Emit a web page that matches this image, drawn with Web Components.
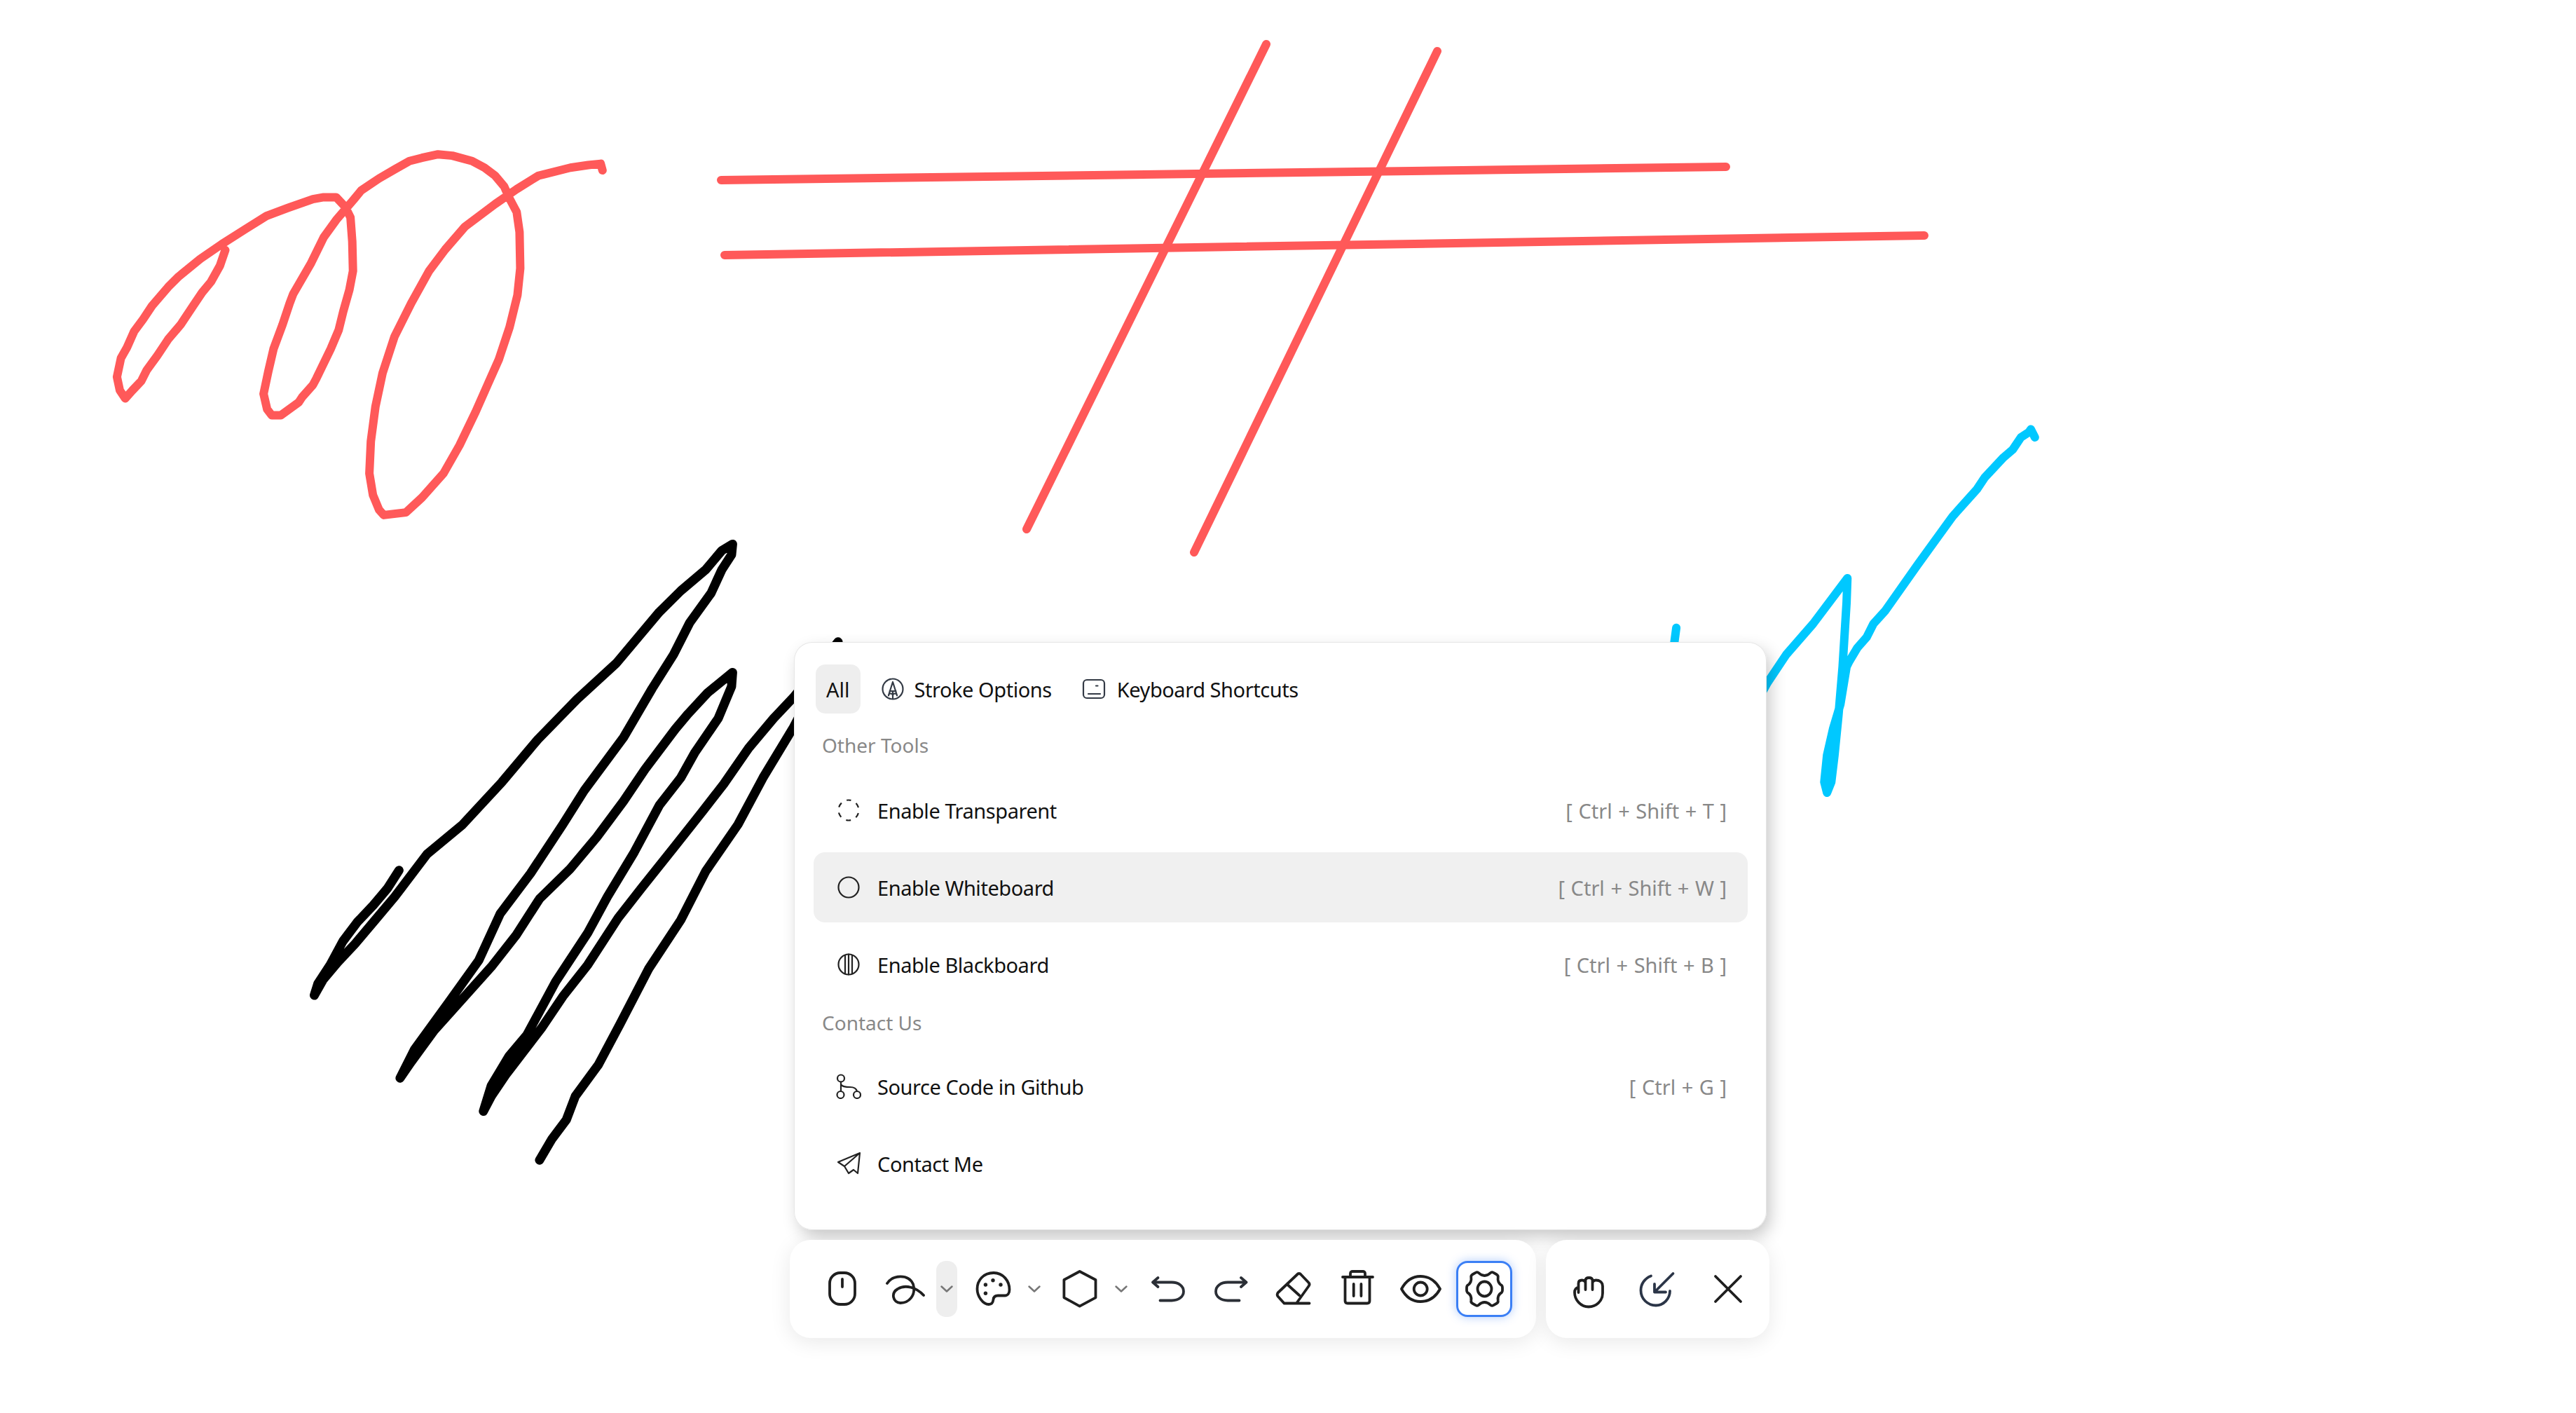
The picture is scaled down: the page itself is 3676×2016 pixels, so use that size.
<!DOCTYPE html>
<html>
<head>
<meta charset="utf-8">
<title>Sketch</title>
<style>
    html, body { margin: 0; padding: 0; background: #fff; }
</style>
</head>
<body>
<sketch-app>
    <tool-panel>
        <panel-tab active>All</panel-tab>
        <panel-tab icon="stroke">Stroke Options</panel-tab>
        <panel-tab icon="keyboard">Keyboard Shortcuts</panel-tab>
        <panel-group slot="groups" heading="Other Tools">
            <panel-item icon="dashed" shortcut="[ Ctrl + Shift + T ]">Enable Transparent</panel-item>
            <panel-item icon="circle" shortcut="[ Ctrl + Shift + W ]" active>Enable Whiteboard</panel-item>
            <panel-item icon="striped" shortcut="[ Ctrl + Shift + B ]">Enable Blackboard</panel-item>
        </panel-group>
        <panel-group slot="groups" heading="Contact Us">
            <panel-item icon="git" shortcut="[ Ctrl + G ]">Source Code in Github</panel-item>
            <panel-item icon="send">Contact Me</panel-item>
        </panel-group>
    </tool-panel>
    <tool-dock slot="dock">
        <tool-bar class="main">
            <tool-button icon="mouse"></tool-button>
            <tool-button icon="squiggle"></tool-button>
            <tool-chevron hover></tool-chevron>
            <tool-button icon="palette"></tool-button>
            <tool-chevron></tool-chevron>
            <tool-button icon="hexagon"></tool-button>
            <tool-chevron></tool-chevron>
            <tool-button icon="undo"></tool-button>
            <tool-button icon="redo"></tool-button>
            <tool-button icon="eraser"></tool-button>
            <tool-button icon="trash"></tool-button>
            <tool-button icon="eye"></tool-button>
            <tool-button icon="gear" active></tool-button>
        </tool-bar>
        <tool-bar wide>
            <tool-button icon="hand"></tool-button>
            <tool-button icon="pointer"></tool-button>
            <tool-button icon="close"></tool-button>
        </tool-bar>
    </tool-dock>
</sketch-app>

<script>
const UI_FONT = '"Noto Sans", "Open Sans", sans-serif';

// Toolbar icons are drawn on a 64 box, panel icons on a 36 box
const ICONS = {
    mouse: '<rect x="14" y="9" width="36" height="45" rx="15"/><path d="M32 18V29"/>',
    squiggle: '<path d="M6 24C14 12 36 10 43 25C48 42 36 52 25 52C14 51 11 38 21 32C32 25 48 30 58 41"/>',
    palette: '<path d="M33 9C18 9 9.5 20 9.5 32C9.5 43 18 54 26 54C31 54 32 51 32.5 47C33 43 35 41.5 39 41.5H49C53 41.5 55.5 38 55.5 33C55.5 20 46 9 33 9Z"/><g fill="#222" stroke="none"><circle cx="21.4" cy="26" r="2.7"/><circle cx="32" cy="19.7" r="2.7"/><circle cx="43" cy="26" r="2.7"/><circle cx="21.4" cy="38.3" r="2.7"/></g>',
    hexagon: '<path d="M31.7 7L54.5 19V44.3L31.7 56.7L9.4 44.3V19Z"/>',
    undo: '<g stroke="#2b2f36"><path d="M18.5 16L11 22.5L18.5 29M11 22.5H38C48 22.5 55 28 55 35.5C55 43 48 48.5 38 48.5H21.5"/></g>',
    redo: '<g stroke="#2b2f36"><path d="M47 16L54.5 22.5L47 29M54.5 22.5H28C18 22.5 11 28 11 35.5C11 43 18 48.5 28 48.5H44.5"/></g>',
    eraser: '<path d="M37 11.5C38.5 9.5 41 9.5 42.5 11.5L53.5 23C54.8 24.5 54.8 26.5 53.5 28L36 52.5H18.5L9.5 42.5C8.3 41 8.3 39.5 9.5 37.5ZM24 26.5L40 41M18.5 52.5H54.5"/>',
    trash: '<path d="M11 15H54M22 15V10C22 8 23.500 7 25 7H40C41.500 7 43 8 43 10V15M14.500 15V49C14.500 51 15.500 52.500 18 52.500H46C48.500 52.500 49.500 51 49.500 49V15M26.700 25V42M37.400 25V42"/>',
    eye: '<path d="M5 32C12 19 22 14 32 14C43 14 53 19 60 32C53 45 43 50 32 50C22 50 12 45 5 32Z"/><circle cx="32.200" cy="32" r="9.500"/>',
    gear: '<path d="M24 9C27 12 29.500 13 32.500 13C35.500 13 38 12 41 9C42.500 8 44 8 45 8.700L50 11.500C51.500 12.500 52 14 51.700 15.500C51 20 52 24 57 27C58 28 58 29 58 30V34C58 35 58 36 57 37C52 40 51 44 51.700 48.500C52 50 51.500 51.500 50 52.500L45 55.300C44 56 42.500 56 41 55C38 52 35.500 51 32.500 51C29.500 51 27 52 24 55C22.500 56 21 56 20 55.300L15 52.500C13.500 51.500 13 50 13.300 48.500C14 44 13 40 8 37C7 36 7 35 7 34V30C7 29 7 28 8 27C13 24 14 20 13.300 15.500C13 14 13.500 12.500 15 11.500L20 8.700C21 8 22.500 8 24 9Z"/><ellipse cx="32.500" cy="32" rx="10" ry="10.500"/>',
    hand: '<path d="M13 37C13 32.500 15 30 18.500 30V24C18.500 20.500 21 19.500 23.500 19.500C26 19.500 28.500 20.500 28.500 24V20C28.500 17 31 16 33.500 16C36 16 38.500 17 38.500 20V24C38.500 20.500 41 19.500 43.500 19.500C48 19.500 53 22 53 28V38C53 49 44 57.500 33 57.500C22 57.500 13 48 13 37ZM28.500 24V33M38.500 24V33M18.500 30V37"/>',
    pointer: '<g stroke="#2b3547"><path d="M23 13.500C14 17 8.500 25 8.500 34C8.500 46 18 55.500 30 55.500C41 55.500 50 46 50 35"/><path d="M54.500 10L28 36.500M28 25V36.500H44"/></g>',
    close: '<path d="M15 14L51 50M51 14L15 50"/>',
    stroke: '<circle cx="18" cy="18" r="14.500"/><path d="M12 27L18 8L24 27M13.500 21H22.500M12 27.500A3 3 0 0 1 18 27.500A3 3 0 0 1 24 27.500M18 22V32"/>',
    keyboard: '<rect x="3" y="5" width="30" height="26" rx="5"/><path d="M21 13.500H23.500M10 25H27"/>',
    dashed: '<circle cx="18" cy="18" r="14.500" stroke-dasharray="7 8.180" stroke-dashoffset="3.500" transform="rotate(-90 18 18)" stroke-linecap="butt"/>',
    circle: '<circle cx="18" cy="18" r="14.500"/>',
    striped: '<circle cx="18" cy="18" r="14.500"/><path d="M13 5V31M18 3.500V32.500M23 5V31"/>',
    git: '<circle cx="7" cy="6.500" r="5"/><circle cx="6.500" cy="30" r="5"/><circle cx="30" cy="30" r="5"/><path d="M7 11.500V25M7 15C9 19 15 19 20 19C26 19 29 21 30 25"/>',
    send: '<path d="M34 3L3 16L12 22L18 32L25 27L31 32ZM34 3L12 22"/>'
};

function iconSvg(name, size) {
    return `<svg width="${size}" height="${size}" viewBox="0 0 ${size} ${size}" fill="none" stroke="currentColor" stroke-linecap="round" stroke-linejoin="round">${ICONS[name]}</svg>`;
}

// Strokes traced from zoomed crops: [origin x, origin y, scale x, scale y]
const STROKES = [
    {
        color: '#ff5959',
        crop: [120, 180, 1.96, 2.613],
        points: [395,462, 380,520, 355,580, 330,620, 305,670, 270,740, 235,795, 205,855, 175,910, 160,950, 135,985, 115,1015, 100,985, 92,935, 103,865, 120,825, 140,765, 165,720, 190,670, 235,600, 265,560, 325,495, 385,440, 450,385, 510,335, 570,305, 640,272, 670,265, 705,265, 730,300, 745,340, 750,430, 752,540, 742,610, 725,690, 712,760, 690,830, 650,940, 640,965, 610,1010, 600,1030, 550,1078, 525,1078, 512,1055, 502,998, 515,915, 530,830, 555,740, 575,660, 585,625, 635,510, 670,415, 705,350, 750,280, 775,240, 825,195, 870,160, 910,130, 945,118, 990,105, 1030,110, 1085,130, 1120,155, 1150,185, 1175,225, 1190,270, 1210,320, 1218,395, 1220,530, 1212,630, 1190,750, 1160,870, 1130,960, 1095,1065, 1050,1190, 1005,1295, 945,1385, 900,1440, 838,1450, 825,1430, 808,1375, 798,1295, 802,1175, 815,1045, 835,920, 868,785, 915,660, 965,540, 1010,460, 1065,375, 1150,290, 1210,235, 1270,185, 1360,155, 1410,145, 1445,140, 1450,165]
    },
    { color: '#ff5959', crop: [0, 0, 1, 1], points: [1029,257, 2463,238] },
    { color: '#ff5959', crop: [0, 0, 1, 1], points: [1034,364, 2746,336] },
    { color: '#ff5959', crop: [0, 0, 1, 1], points: [1807,63, 1465,755] },
    { color: '#ff5959', crop: [0, 0, 1, 1], points: [2051,73, 1704,788] },
    {
        color: '#000',
        width: 13,
        crop: [400, 740, 1.96, 1.65],
        points: [332,828, 300,870, 260,910, 215,950, 175,995, 140,1050, 105,1095, 95,1122, 120,1085, 160,1045, 210,1000, 265,945, 320,890, 410,790, 510,720, 620,620, 720,520, 830,425, 940,340, 1060,220, 1120,170, 1190,120, 1235,75, 1265,60, 1262,85, 1235,120, 1205,175, 1145,245, 1100,320, 1040,400, 960,515, 850,640, 790,720, 700,835, 615,930, 555,1040, 470,1140, 375,1250, 335,1317, 365,1280, 430,1205, 510,1130, 590,1055, 660,980, 725,895, 810,825, 885,750, 960,665, 1020,590, 1105,495, 1140,460, 1195,410, 1265,362, 1262,395, 1225,470, 1160,550, 1120,610, 1060,675, 990,785, 915,890, 860,975, 770,1090, 690,1215, 640,1265, 590,1335, 568,1395, 590,1360, 630,1310, 680,1255, 730,1200, 790,1125, 860,1050, 945,940, 1010,870, 1100,775, 1180,690, 1240,625, 1310,540, 1380,470, 1436,420, 1560,290, 1436,490, 1350,610, 1280,720, 1190,830, 1120,945, 1030,1060, 950,1190, 890,1285, 825,1360, 800,1415, 760,1460, 725,1510]
    },
    {
        color: '#00c8ff',
        crop: [2350, 580, 2.613, 2.613],
        points: [110,825, 100,900, 300,1300, 450,1030, 520,925, 620,810, 748,640, 745,730, 730,970, 715,1150, 700,1300, 688,1400, 672,1440, 662,1400, 672,1300, 695,1200, 722,1110, 745,970, 755,950, 785,900, 820,860, 845,810, 890,760, 1010,590, 1140,410, 1230,310, 1260,265, 1330,190, 1365,160, 1395,115, 1425,95, 1432,85, 1447,115]
    }
];

customElements.define('sketch-app', class extends HTMLElement {
    constructor() {
        super();
        this.attachShadow({mode: 'open'}).innerHTML = `
<style>
    :host {
        display: grid;
        width: 3676px;
        height: 2016px;
        overflow: hidden;
        background: #fff;
        font-family: ${UI_FONT};
    }
    sketch-canvas, .ui { grid-area: 1 / 1; }
    .ui {
        display: flex;
        flex-direction: column;
        padding: 916px 0 0 1127px;
    }
</style>
<sketch-canvas></sketch-canvas>
<div class="ui">
    <slot></slot>
    <slot name="dock"></slot>
</div>`;
    }
});

customElements.define('sketch-canvas', class extends HTMLElement {
    constructor() {
        super();
        const paths = STROKES.map(({color, width, crop, points}) => {
            const [ox, oy, sx, sy] = crop;
            const mapped = [];
            for (let i = 0; i < points.length; i += 2) {
                mapped.push(`${(ox + points[i] / sx).toFixed(1)},${(oy + points[i + 1] / sy).toFixed(1)}`);
            }
            return `<polyline points="${mapped.join(' ')}" stroke="${color}" stroke-width="${width || 12}"/>`;
        }).join('');
        this.attachShadow({mode: 'open'}).innerHTML = `
<style>
    :host { display: block; }
    svg { display: block; }
</style>
<svg width="3676" height="2016" fill="none" stroke-linecap="round" stroke-linejoin="round">${paths}</svg>`;
    }
});

customElements.define('tool-panel', class extends HTMLElement {
    constructor() {
        super();
        this.attachShadow({mode: 'open'}).innerHTML = `
<style>
    :host {
        display: block;
        box-sizing: border-box;
        width: 1388px;
        height: 839px;
        margin-left: 6px;
        padding: 32px 27px 0 28px;
        background: #fff;
        border-radius: 26px;
        box-shadow: 0 0 0 1px #e6e6e6 inset, 6px 10px 24px -2px rgba(0,0,0,.24);
        position: relative;
        z-index: 1;
    }
    .tabs { display: flex; gap: 14px; padding-left: 3px; }
</style>
<div class="tabs"><slot></slot></div>
<slot name="groups"></slot>`;
    }
});

customElements.define('panel-tab', class extends HTMLElement {
    constructor() {
        super();
        const icon = this.getAttribute('icon');
        this.attachShadow({mode: 'open'}).innerHTML = `
<style>
    :host {
        display: flex;
        align-items: center;
        gap: 13px;
        height: 70px;
        padding: 0 14px;
        border-radius: 14px;
        font-size: 29px;
        letter-spacing: -.45px;
        color: #111;
    }
    :host([active]) { background: #eee; padding: 0 15px; letter-spacing: 0; }
    :host([icon="keyboard"]) { gap: 15px; }
    svg { display: block; color: #333a45; stroke-width: 2.2; }
</style>
${icon ? iconSvg(icon, 36) : ''}<slot></slot>`;
    }
});

customElements.define('panel-group', class extends HTMLElement {
    constructor() {
        super();
        this.attachShadow({mode: 'open'}).innerHTML = `
<style>
    :host { display: block; }
    .heading {
        height: 36px;
        line-height: 36px;
        padding: 15px 0 23px 12px;
        font-size: 28px;
        color: #888;
    }
    :host(:first-of-type) .heading { padding-top: 27px; padding-bottom: 25px; }
    .items { display: flex; flex-direction: column; gap: 10px; }
</style>
<div class="heading">${this.getAttribute('heading')}</div>
<div class="items"><slot></slot></div>`;
    }
});

customElements.define('panel-item', class extends HTMLElement {
    constructor() {
        super();
        const shortcut = this.getAttribute('shortcut');
        this.attachShadow({mode: 'open'}).innerHTML = `
<style>
    :host {
        display: flex;
        align-items: center;
        gap: 23px;
        height: 100px;
        padding: 0 30px 0 32px;
        border-radius: 16px;
        font-size: 29px;
        letter-spacing: -.45px;
        color: #111;
    }
    :host([active]) { background: #f0f0f0; }
    svg { display: block; color: #222; stroke-width: 2.2; flex: none; }
    .label { flex: 1; }
    .shortcut { color: #888; font-size: 29px; letter-spacing: 0; word-spacing: 1px; }
</style>
${iconSvg(this.getAttribute('icon'), 36)}
<span class="label"><slot></slot></span>
${shortcut ? `<span class="shortcut">${shortcut}</span>` : ''}`;
    }
});

customElements.define('tool-dock', class extends HTMLElement {
    constructor() {
        super();
        this.attachShadow({mode: 'open'}).innerHTML = `
<style>
    :host { display: flex; gap: 14px; margin-top: 14px; position: relative; z-index: 2; }
</style>
<slot></slot>`;
    }
});

customElements.define('tool-bar', class extends HTMLElement {
    constructor() {
        super();
        this.attachShadow({mode: 'open'}).innerHTML = `
<style>
    :host {
        display: flex;
        align-items: center;
        gap: 10.400px;
        box-sizing: border-box;
        height: 140px;
        padding: 0 34px 0 35px;
        background: #fff;
        border-radius: 30px;
        box-shadow: 0 6px 30px rgba(0,0,0,.09);
    }
    :host([wide]) { gap: 19.500px; padding: 0 20px; }
</style>
<slot></slot>`;
    }
});

customElements.define('tool-button', class extends HTMLElement {
    constructor() {
        super();
        this.attachShadow({mode: 'open'}).innerHTML = `
<style>
    :host {
        display: flex;
        align-items: center;
        justify-content: center;
        flex: none;
        width: 80px;
        height: 80px;
        box-sizing: border-box;
        border-radius: 16px;
        color: #1f1f1f;
    }
    :host([active]) {
        border: 3.500px solid #3b7ff5;
        box-shadow: 0 0 14px rgba(59,127,245,.4);
    }
    svg { display: block; stroke-width: 3.800; }
</style>
${iconSvg(this.getAttribute('icon'), 64)}`;
    }
});

customElements.define('tool-chevron', class extends HTMLElement {
    constructor() {
        super();
        this.attachShadow({mode: 'open'}).innerHTML = `
<style>
    :host {
        display: flex;
        align-items: center;
        justify-content: center;
        flex: none;
        width: 30px;
        height: 80px;
        margin-left: -6.400px;
        border-radius: 14px;
    }
    :host([hover]) { background: #eee; }
    svg { display: block; }
</style>
<svg width="20" height="12" viewBox="0 0 20 12" fill="none" stroke="#777" stroke-width="2.500" stroke-linecap="round" stroke-linejoin="round"><path d="M2.500 2.500L10 9.500L17.500 2.500"/></svg>`;
    }
});
</script>
</body>
</html>
